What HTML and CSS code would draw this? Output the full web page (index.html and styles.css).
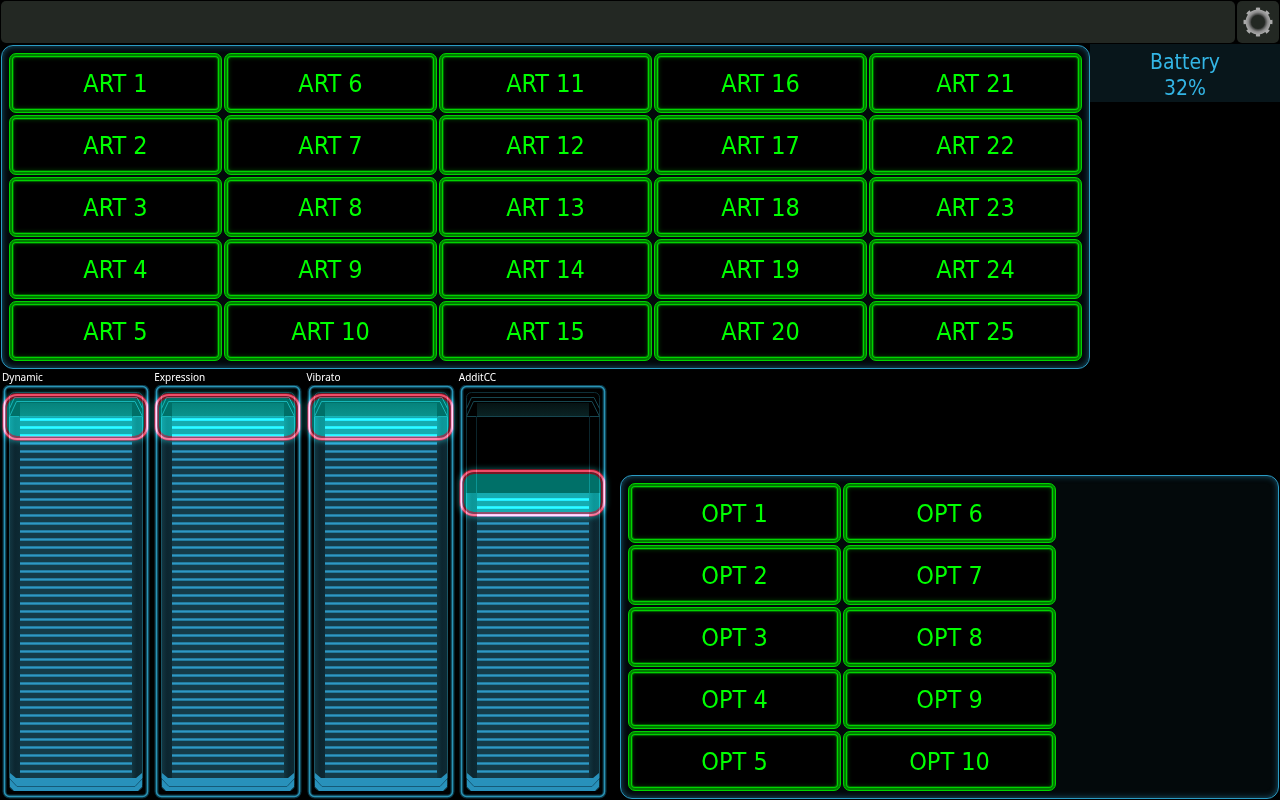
FILE: index.html
```html
<!DOCTYPE html>
<html lang="en">

<head>
  <meta charset="utf-8">
  <title>Control surface</title>
  <link rel="stylesheet" href="styles.css">
  <script src="panel.js" defer></script>
</head>

<body>
  <svg width="0" height="0" class="defs" aria-hidden="true">
    <defs>
      <linearGradient id="cap" x1="0" y1="0" x2="0" y2="1">
        <stop offset="0" stop-color="#061314" />
        <stop offset="1" stop-color="#0a2324" />
      </linearGradient>
      <linearGradient id="side" x1="0" y1="0" x2="1" y2="0">
        <stop offset="0" stop-color="#123540" />
        <stop offset="0.5" stop-color="#0c2630" />
        <stop offset="1" stop-color="#0d2a34" />
      </linearGradient>
      <pattern id="bars" width="8" height="8" y="1" patternUnits="userSpaceOnUse">
        <rect width="8" height="8" fill="#153b48" />
        <rect width="8" height="3" fill="#237b9e" />
        <rect y="1" width="8" height="1" fill="#2f98c4" />
      </pattern>
      <radialGradient id="metal" cx="15" cy="15" r="13" gradientUnits="userSpaceOnUse">
        <stop offset="0.55" stop-color="#3c3e3c" />
        <stop offset="0.75" stop-color="#8a8a8a" />
        <stop offset="0.95" stop-color="#aaaaaa" />
      </radialGradient>
    </defs>
    <!-- empty fader -->
    <symbol id="well" viewBox="0 0 152 415">
      <g fill="none">
        <rect x="4.5" y="1.5" width="143" height="410" rx="5" stroke="#0b3442" stroke-width="4" />
        <rect x="4.5" y="1.5" width="143" height="410" rx="5" stroke="#2a93b5" stroke-width="1.5" />
        <rect x="9.5" y="7.5" width="133" height="398" rx="5" stroke="#0e2f38" />
        <path d="M9.5 23.5L14.5 12.5H137L142.5 23.5" stroke="#174650" />
        <path d="M9.5 31.5L16.5 16.5H135L142.5 31.5Z" stroke="#174650" />
        <path d="M19.5 31V393M132.5 31V393" stroke="#0b252c" />
      </g>
      <rect x="20" y="18" width="112" height="13" fill="url(#cap)" />
    </symbol>
    <!-- filled part -->
    <symbol id="level" viewBox="0 0 152 415">
      <rect x="10" y="31" width="10" height="362" fill="url(#side)" />
      <rect x="132" y="31" width="10" height="362" fill="url(#side)" />
      <path d="M9.5 31V393M142.5 31V393" stroke="#1b5565" />
      <rect x="20" y="31" width="112" height="362" fill="url(#bars)" />
      <path d="M10 388L16 393H136L142 388V402L138 406H14L10 402Z" fill="#2891bb" />
      <path d="M10 394L17 401.5H135L142 394" fill="none" stroke="#155a78" />
    </symbol>
  </svg>
  <header class="topbar">
    <div class="tabs"></div>
    <button class="settings" aria-label="Settings">
      <svg viewBox="0 0 30 30" width="30" height="30" fill="none">
        <circle cx="15" cy="15" r="13" stroke="#aaaaaa" stroke-width="3" pathLength="80" stroke-dasharray="4 6" stroke-dashoffset="2" />
        <circle cx="15" cy="15" r="9.75" stroke="url(#metal)" stroke-width="5.5" />
      </svg>
    </button>
  </header>
  <main class="surface">
    <div class="upper">
      <section class="panel keys" id="art"></section>
      <aside class="battery">Battery<br>32%</aside>
    </div>
    <div class="lower">
      <section class="faders" id="faders"></section>
      <section class="panel keys options" id="opt"></section>
    </div>
  </main>
</body>

</html>
```
FILE: styles.css
```css
* {
  box-sizing: border-box;
}

body {
  margin: 0;
  min-height: 100vh;
  display: flex;
  flex-direction: column;
  background: #000;
  color: #fff;
  font-family: "DejaVu Sans Condensed", "DejaVu Sans", sans-serif;
}

.defs {
  position: absolute;
}

.topbar {
  display: flex;
  gap: 2px;
  height: 44px;
  padding: 1px;
}

.tabs {
  flex: 1;
  border-radius: 5px;
  background: #232823;
}

.settings {
  display: flex;
  align-items: center;
  justify-content: center;
  width: 42px;
  padding: 0;
  border: none;
  border-radius: 5px;
  background: #232823;
}

.surface {
  flex: 1;
  display: flex;
  flex-direction: column;
}

.upper,
.lower {
  display: flex;
}

.lower {
  flex: 1;
  align-items: flex-end;
  gap: 11px;
}

.panel {
  border: 1px solid #2b9bc4;
  border-radius: 12px;
  background: #03090b;
  box-shadow: inset 0 0 6px #1a5a75;
}

.keys {
  display: grid;
  grid-auto-flow: column;
  grid-template-rows: repeat(5, 60px);
  grid-auto-columns: 213px;
  gap: 2px;
  padding: 7px;
}

.upper .keys {
  margin: 1px 0 0 1px;
}

.options {
  flex: 1;
  margin: 0 1px 1px 0;
}

.key {
  padding: 1px 0 0;
  border: 1px solid #00d400;
  border-radius: 7px;
  background: #000;
  box-shadow: inset 0 0 0 2px #007c00, inset 0 0 0 3px #00d400, inset 0 0 0 4px #005800, inset 0 0 4px 4px #003000;
  color: #00ff00;
  font-family: inherit;
  font-size: 25px;
}

.battery {
  flex: 1;
  height: 58px;
  padding-top: 5px;
  background: #08161b;
  color: #33b5e5;
  font-size: 21px;
  line-height: 26px;
  text-align: center;
}

.faders {
  display: grid;
  grid-template-columns: repeat(4, 1fr);
  width: 609px;
}

.fader label {
  display: block;
  height: 15px;
  padding-left: 2px;
  font-family: "Noto Sans", sans-serif;
  font-size: 10px;
  line-height: 15px;
}

.well {
  position: relative;
  width: 152px;
  height: 415px;
}

.well svg {
  display: block;
}

.well input {
  position: absolute;
  top: 9px;
  left: 3px;
  width: 145px;
  height: 405px;
  margin: 0;
  appearance: none;
  background: none;
  writing-mode: vertical-lr;
  direction: rtl;
  mix-blend-mode: plus-lighter;
}

.well input::-webkit-slider-thumb {
  appearance: none;
  width: 145px;
  height: 46px;
  border: 2px solid #f04c68;
  border-radius: 14px;
  background: #007068;
  box-shadow: inset 0 0 0 2px #781624, 0 0 0 1px #781624, 0 0 5px 2px #0a4a4a;
}
```
FILE: panel.js
```js
const MAX = 127;
const TOP = 31;
const TRAVEL = 359;

const FADERS = [
  ['Dynamic', 127],
  ['Expression', 127],
  ['Vibrato', 127],
  ['AdditCC', 100]
];

function addKeys(id, prefix, count) {
  const panel = document.getElementById(id);
  for (let i = 1; i <= count; i++) {
    const key = document.createElement('button');
    key.className = 'key';
    key.textContent = prefix + ' ' + i;
    panel.appendChild(key);
  }
}

function addFader(name, value) {
  const id = name.toLowerCase();
  const fader = document.createElement('div');
  fader.className = 'fader';
  fader.innerHTML = `
    <label for="${id}">${name}</label>
    <div class="well">
      <svg width="152" height="415" aria-hidden="true">
        <clipPath id="${id}-clip"><rect width="152" height="415" /></clipPath>
        <use href="#well" width="152" height="415" />
        <use href="#level" width="152" height="415" clip-path="url(#${id}-clip)" />
      </svg>
      <input type="range" id="${id}" min="0" max="${MAX}" value="${value}">
    </div>`;
  const input = fader.querySelector('input');
  const clip = fader.querySelector('clipPath rect');
  function update() {
    clip.setAttribute('y', Math.round(TOP + (1 - input.value / MAX) * TRAVEL) + 1);
  }
  input.addEventListener('input', update);
  update();
  document.getElementById('faders').appendChild(fader);
}

addKeys('art', 'ART', 25);
addKeys('opt', 'OPT', 10);
FADERS.forEach(function (f) {
  addFader(f[0], f[1]);
});
```
